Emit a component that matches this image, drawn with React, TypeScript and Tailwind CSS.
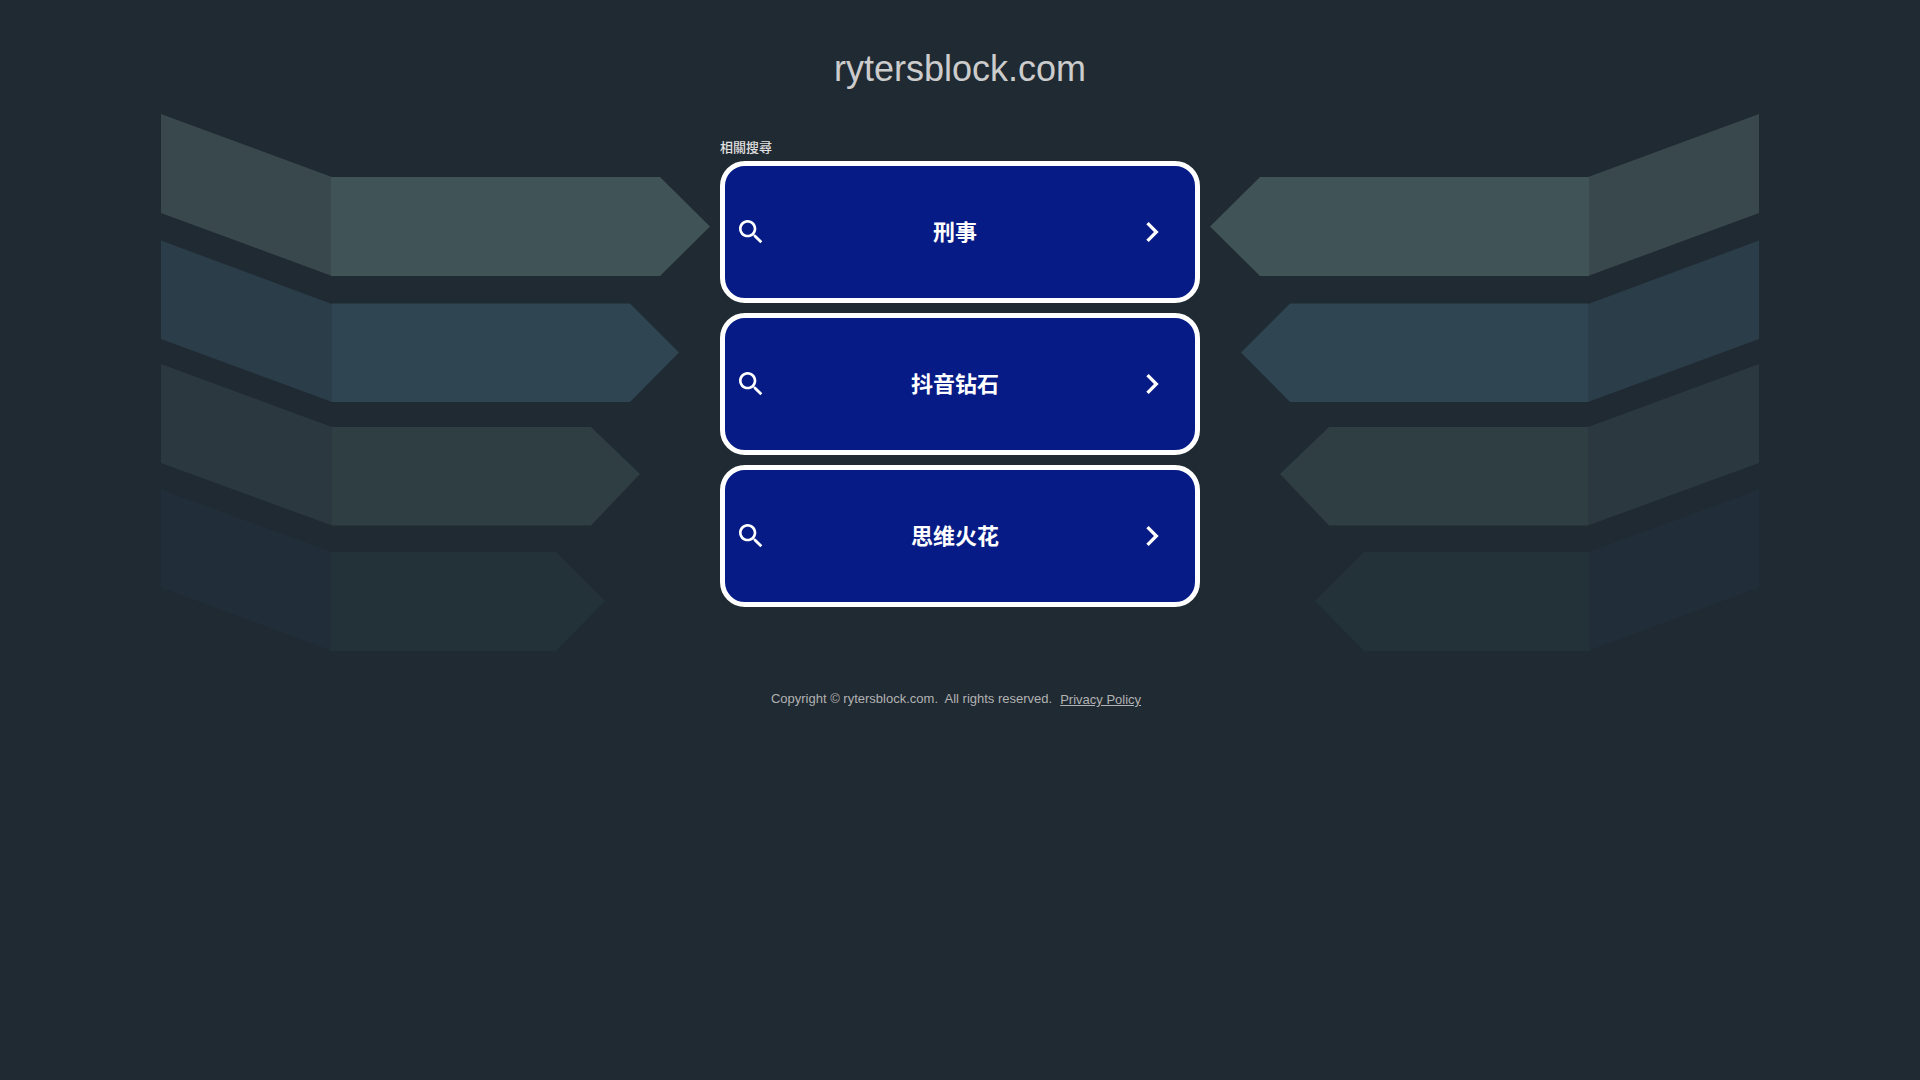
const searches = ["刑事", "抖音钻石", "思维火花"];

const ribbons = [
  { side: "0,0 171,63 171,162 0,99", sideFill: "#39484c", body: "170,63 499,63 549,112.5 499,162 170,162", bodyFill: "#405356" },
  { side: "0,126.5 171,190 171,288 0,225", sideFill: "#2b3d49", body: "171,189.5 469,189.5 518,238.5 469,288 171,288", bodyFill: "#2f4552" },
  { side: "0,250 171,313 171,411.5 0,349", sideFill: "#2b383f", body: "171,313 430,313 479,360 430,411.5 171,411.5", bodyFill: "#2f3e42" },
  { side: "0,375.5 171,438 171,537 0,473.5", sideFill: "#212d39", body: "170,438 395,438 444,487 395,537 170,537", bodyFill: "#233139" },
];

function Ribbons({ mirrored = false }: { mirrored?: boolean }) {
  return (
    <svg
      viewBox="0 0 549 537"
      aria-hidden="true"
      className={mirrored ? "w-full max-w-[549px] -scale-x-100" : "w-full max-w-[549px]"}
    >
      {ribbons.map((r) => (
        <g key={r.side}>
          <polygon points={r.side} fill={r.sideFill} />
          <polygon points={r.body} fill={r.bodyFill} />
        </g>
      ))}
    </svg>
  );
}

function SearchIcon() {
  return (
    <svg viewBox="0 0 24 24" aria-hidden="true" className="size-8 shrink-0 fill-white">
      <path d="M15.5 14h-.79l-.28-.27C15.41 12.59 16 11.11 16 9.5 16 5.91 13.09 3 9.5 3S3 5.91 3 9.5 5.91 16 9.5 16c1.61 0 3.09-.59 4.23-1.57l.27.28v.79l5 4.99L20.49 19l-4.99-5zm-6 0C7.01 14 5 11.99 5 9.5S7.01 5 9.5 5 14 7.01 14 9.5 11.99 14 9.5 14z" />
    </svg>
  );
}

function ChevronIcon() {
  return (
    <svg viewBox="0 0 24 24" aria-hidden="true" className="size-10 shrink-0 fill-white">
      <path d="M10 6 8.59 7.41 13.17 12l-4.58 4.59L10 18l6-6z" />
    </svg>
  );
}

export default function App() {
  return (
    <div className="min-h-screen bg-[#202a32] font-['Liberation_Sans','Noto_Sans_CJK_TC',sans-serif]">
      <div className="grid grid-cols-[1fr_480px_1fr] items-start">
        <div className="flex justify-end pt-[114px] pr-[10px]">
          <Ribbons />
        </div>
        <div>
          <h1 className="pt-[49px] text-center text-4xl leading-10 text-[#cccccc]">rytersblock.com</h1>
          <main className="pt-[49px]">
            <h2 className="pb-[3px] text-[13px] leading-5 font-medium text-[#e0e0e0]">相關搜尋</h2>
            <ul className="flex flex-col gap-[10px]">
              {searches.map((term) => (
                <li key={term}>
                  <a
                    href="#"
                    className="flex h-[142px] items-center rounded-[25px] border-5 border-white bg-[#061b85] pr-[23px] pl-[10px] font-['Liberation_Sans','Noto_Sans_CJK_SC',sans-serif] text-[22px] font-bold text-white"
                  >
                    <SearchIcon />
                    <span className="grow pl-[11px] text-center">{term}</span>
                    <ChevronIcon />
                  </a>
                </li>
              ))}
            </ul>
          </main>
        </div>
        <div className="flex justify-start pt-[114px] pl-[10px]">
          <Ribbons mirrored />
        </div>
      </div>
      <footer className="flex items-start justify-center gap-2 pt-[38px] pr-2 text-[13px] leading-5 text-[#b2b2b2]">
        <span className="whitespace-pre">{"Copyright © rytersblock.com.  All rights reserved."}</span>
        <a href="#" className="pt-px underline">Privacy Policy</a>
      </footer>
    </div>
  );
}
